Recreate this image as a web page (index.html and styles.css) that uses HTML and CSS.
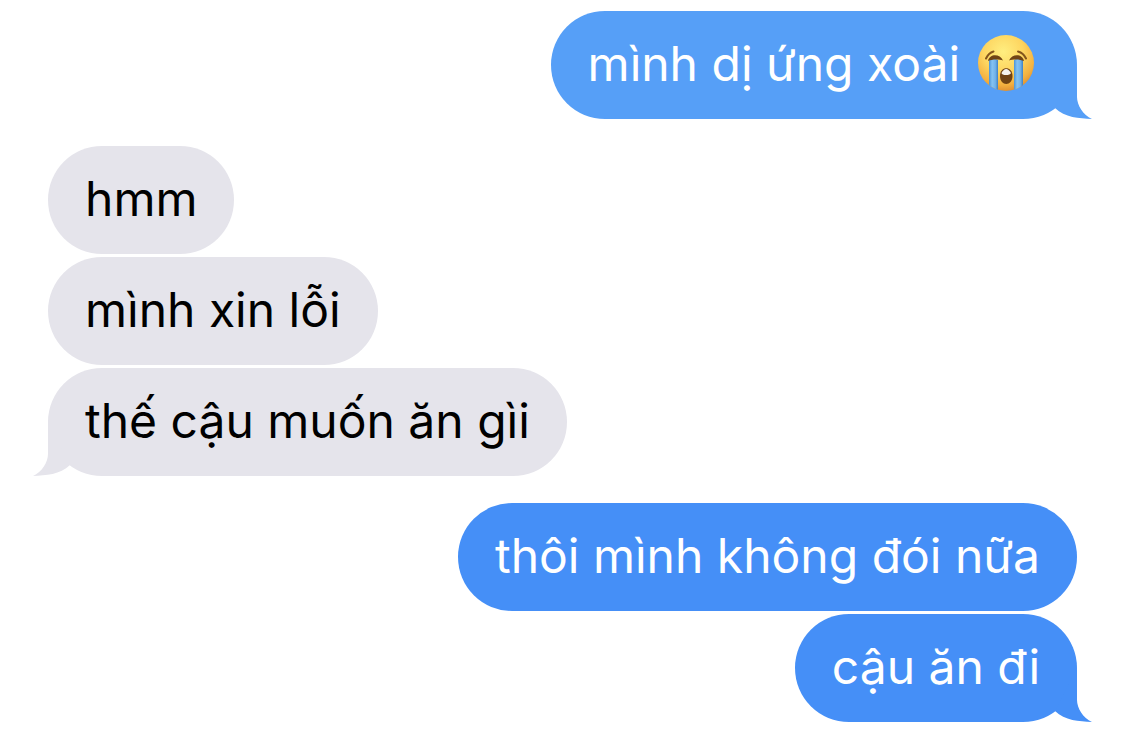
FILE: index.html
```
<!DOCTYPE html>
<html lang="vi">
<head>
    <meta charset="UTF-8">
    <meta name="viewport" content="width=device-width, initial-scale=1.0">
    <title>Tin nhắn</title>
    <link rel="stylesheet" href="styles.css">
</head>
<body>
    <main class="chat">
        <div class="group sent">
            <div class="bubble light">
                <p>mình dị ứng xoài</p>
                <svg class="emoji" viewBox="0 0 64 60" role="img" aria-label="😭">
                    <defs>
                        <radialGradient id="face" cx="0.45" cy="0.3" r="0.72">
                            <stop offset="0" stop-color="#ffee80"/>
                            <stop offset="0.5" stop-color="#fdd560"/>
                            <stop offset="0.82" stop-color="#f3b03f"/>
                            <stop offset="1" stop-color="#dd8c30"/>
                        </radialGradient>
                        <linearGradient id="tear" x1="0" y1="0" x2="1" y2="0">
                            <stop offset="0" stop-color="#4b94d8"/>
                            <stop offset="0.35" stop-color="#84c2f2"/>
                            <stop offset="0.7" stop-color="#72b3ea"/>
                            <stop offset="1" stop-color="#3f80c4"/>
                        </linearGradient>
                        <clipPath id="round"><circle cx="30" cy="29" r="28"/></clipPath>
                    </defs>
                    <circle cx="30" cy="29" r="28" fill="url(#face)"/>
                    <g clip-path="url(#round)" fill="url(#tear)">
                        <path d="M13 26q4-3 9 0v30.500q-5-1-9-4z"/>
                        <path d="M38 26q4-3 9 0v26.500q-4 3-9 4z"/>
                    </g>
                    <g fill="#704415">
                        <path d="M12 27C13.500 19.500 24 19.500 27 26.500C23 25 16 25 12 27Z"/>
                        <path d="M33 26.500C36 19.500 46.500 19.500 48 27C44 25 37 25 33 26.500Z"/>
                    </g>
                    <path d="M10 24.500Q12.500 19 17.500 17.500M42 17.500Q47.500 19 50 24.500" fill="none" stroke="#84551c" stroke-width="2" stroke-linecap="round"/>
                    <path d="M24 42C24 31.500 36.500 31.500 36.500 42C36.500 52.500 24 52.500 24 42Z" fill="#704313"/>
                    <path d="M25.500 39Q30 31 35 39Q34 41 30 41T25.500 39Z" fill="#f7f3ec"/>
                </svg>
                <svg class="tail" viewBox="0 0 37 54"><path d="M22 0V32C22 40 28 50 37 54C24 53 10 53 0 43Z" fill="currentColor"/></svg>
            </div>
        </div>

        <div class="group received">
            <div class="bubble"><p>hmm</p></div>
            <div class="bubble"><p>mình xin lỗi</p></div>
            <div class="bubble">
                <p>thế cậu muốn ăn gìi</p>
                <svg class="tail" viewBox="0 0 37 54"><path d="M22 0V32C22 40 28 50 37 54C24 53 10 53 0 43Z" fill="currentColor"/></svg>
            </div>
        </div>

        <div class="group sent">
            <div class="bubble"><p>thôi mình không đói nữa</p></div>
            <div class="bubble">
                <p>cậu ăn đi</p>
                <svg class="tail" viewBox="0 0 37 54"><path d="M22 0V32C22 40 28 50 37 54C24 53 10 53 0 43Z" fill="currentColor"/></svg>
            </div>
        </div>
    </main>
</body>
</html>
```
FILE: styles.css
```
* {
    margin: 0;
    padding: 0;
    box-sizing: border-box;
}
body {
    background: #fff;
    font-family: Inter, sans-serif;
    font-size: 48px;
    line-height: 60px;
}
.chat {
    display: flex;
    flex-direction: column;
    gap: 27px;
    padding: 11px 48px 12px;
}
.group {
    display: flex;
    flex-direction: column;
    gap: 3px;
}
.sent {
    align-items: flex-end;
}
.received {
    align-items: flex-start;
}
.bubble {
    position: relative;
    display: flex;
    align-items: center;
    gap: 16px;
    padding: 23px 37px 25px;
    border-radius: 54px;
    background: #e5e4eb;
    color: #000;
}
.sent .bubble {
    background: #458ff7;
    color: #fff;
}
.sent .light {
    background: #569ff7;
}
.emoji {
    width: 64px;
    height: 60px;
}
/* đuôi bong bóng */
.tail {
    position: absolute;
    right: -15px;
    bottom: 0;
    width: 37px;
    height: 54px;
    color: #458ff7;
}
.light .tail {
    color: #569ff7;
}
.received .tail {
    right: auto;
    left: -15px;
    color: #e5e4eb;
    transform: scaleX(-1);
}
```
